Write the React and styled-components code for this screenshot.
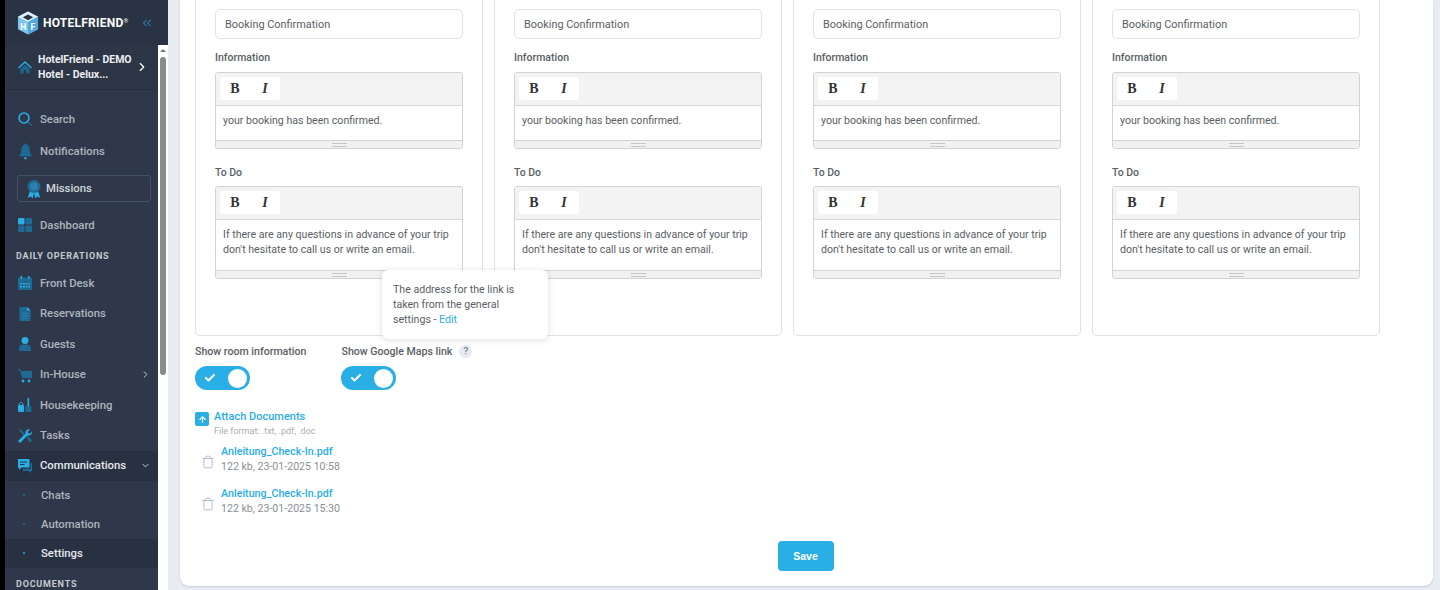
import React from 'react';
import styled, { createGlobalStyle } from 'styled-components';
import { ChevronRight, ChevronDown, ChevronsLeft, Check, Trash, ArrowUp } from 'lucide-react';

const GlobalStyle = createGlobalStyle`
  html, body { margin: 0; padding: 0; height: 590px; overflow: hidden; background: #e9ecf1; }
  body { font-family: Roboto, "Liberation Sans", sans-serif; color: #5a5e64; }
  * { box-sizing: border-box; }
`;

const BLUE = '#29aee6';
const DIM = '#1f6a94';

const Page = styled.div`
  display: flex;
  width: 1440px;
  height: 590px;
  overflow: hidden;
`;
const Strip = styled.div`
  width: 5px;
  background: #000;
  flex: none;
`;
const Sidebar = styled.aside`
  width: 163px;
  flex: none;
  display: flex;
  flex-direction: column;
  background: #2e384a;
`;
const Brand = styled.div`
  height: 45px;
  flex: none;
  display: flex;
  align-items: center;
  padding: 0 0 0 12px;
  background: #2a3344;
`;
const BrandName = styled.span`
  margin-left: 4px;
  color: #fff;
  font-size: 12px;
  font-weight: 700;
  letter-spacing: 0.25px;
  width: 88px;
  white-space: nowrap;
  sup { font-size: 6px; font-weight: 400; vertical-align: 4px; line-height: 0; letter-spacing: 0; }
`;
const Collapse = styled.span`
  display: flex;
  margin-left: 9px;
  color: ${BLUE};
`;
const SideBody = styled.div`
  flex: 1;
  display: flex;
  min-height: 0;
`;
const Nav = styled.nav`
  width: 153px;
  flex: none;
  display: flex;
  flex-direction: column;
  overflow: hidden;
`;
const Hotel = styled.div`
  height: 45px;
  flex: none;
  display: flex;
  align-items: center;
  padding-left: 12px;
  background: #2c3647;
  border-bottom: 1px solid #262f3f;
  color: #eceef1;
  font-size: 10.5px;
  font-weight: 700;
  line-height: 15px;
`;
const HotelName = styled.span`
  margin-left: 5px;
  width: 97px;
`;
const HotelArrow = styled.span`
  display: flex;
  color: #fff;
`;
const Spacer = styled.div`
  height: ${p => p.$h}px;
  flex: none;
`;
const Row = styled.div`
  height: ${p => p.$h || 30.5}px;
  flex: none;
  display: flex;
  align-items: center;
  padding-left: ${p => p.$sub ? 18 : 12}px;
  background: ${p => p.$active ? '#283142' : 'transparent'};
  color: ${p => p.$active ? '#e6e9ed' : '#aeb4bd'};
  font-size: 11.3px;
  font-weight: 500;
`;
const RowIcon = styled.span`
  width: ${p => p.$w || 23}px;
  flex: none;
  display: flex;
  align-items: center;
`;
const RowArrow = styled.span`
  margin-left: auto;
  margin-right: 7px;
  display: flex;
  color: #cfd3d9;
`;
const Dot = styled.span`
  width: 2px;
  height: 2px;
  border-radius: 50%;
  margin-right: 16px;
  background: ${p => p.$on ? BLUE : DIM};
`;
const Missions = styled.div`
  height: 27px;
  flex: none;
  margin: 8px 7px 8px 12px;
  display: flex;
  align-items: center;
  padding-left: 6px;
  border: 1px solid #435066;
  border-radius: 3px;
  color: #d2d6db;
  font-size: 11.3px;
  font-weight: 500;
`;
const Section = styled.div`
  flex: none;
  height: ${p => p.$h}px;
  margin: ${p => p.$mt || 0}px 0 1px;
  display: flex;
  align-items: center;
  padding-left: 11px;
  color: #c6cad0;
  font-size: 9px;
  font-weight: 700;
  letter-spacing: 0.8px;
`;
const Scroll = styled.div`
  width: 10px;
  flex: none;
  background: #fff;
  display: flex;
  flex-direction: column;
  align-items: center;
`;
const ScrollUp = styled.span`
  margin-top: 4px;
  width: 0;
  height: 0;
  border-left: 3px solid transparent;
  border-right: 3px solid transparent;
  border-bottom: 3px solid #777;
`;
const Thumb = styled.span`
  margin-top: 5px;
  width: 6px;
  height: 318px;
  border-radius: 3px;
  background: #8b8b8b;
`;

const Content = styled.main`
  flex: 1;
  padding: 0 7px 4px 12px;
  min-width: 0;
`;
const Panel = styled.section`
  position: relative;
  height: 586px;
  background: #fff;
  border-radius: 0 0 9px 9px;
  box-shadow: 0 1px 2px rgba(120, 130, 150, 0.3);
  padding: 0 15px;
  overflow: hidden;
`;
const Cards = styled.div`
  display: grid;
  grid-template-columns: repeat(4, 288px);
  column-gap: 11px;
  margin-top: -25px;
`;
const Card = styled.div`
  height: 361px;
  padding: 0 19px;
  border: 1px solid #dfe2e8;
  border-radius: 5px;
`;
const Label = styled.div`
  height: ${p => p.$h}px;
  padding-top: ${p => p.$top || 0}px;
  font-size: 10.5px;
  font-weight: 500;
  line-height: 14px;
  color: #5a5e64;
`;
const Input = styled.div`
  height: 30px;
  display: flex;
  align-items: center;
  padding-left: 9px;
  border: 1px solid #dfe2e8;
  border-radius: 5px;
  font-size: 10.9px;
`;
const Editor = styled.div`
  border: 1px solid #cfd3da;
  border-radius: 3px;
  overflow: hidden;
`;
const Toolbar = styled.div`
  height: 33px;
  padding: 4px;
  background: #f3f3f3;
  border-bottom: 1px solid #d5d8de;
`;
const ToolGroup = styled.div`
  width: 60px;
  height: 23px;
  display: flex;
  align-items: center;
  background: #fff;
  border-radius: 3px;
`;
const Tool = styled.span`
  width: 30px;
  text-align: center;
  color: #333;
  font-family: "Liberation Serif", serif;
  font-size: 14px;
  font-weight: 700;
  font-style: ${p => p.$italic ? 'italic' : 'normal'};
`;
const EditorText = styled.div`
  height: ${p => p.$h}px;
  padding: 7px 7px 0;
  font-size: 10.6px;
  line-height: 15px;
  color: #5a5e64;
  white-space: nowrap;
`;
const Grip = styled.div`
  height: 8px;
  display: flex;
  justify-content: center;
  align-items: center;
  background: #f1f1f1;
  border-top: 1px solid #cfd3da;
`;
const GripLines = styled.span`
  width: 15px;
  height: 4px;
  border-top: 1px solid #c6c6c6;
  border-bottom: 1px solid #c6c6c6;
`;
const Switches = styled.div`
  display: flex;
  gap: 35px;
  margin-top: 8px;
`;
const SwitchCol = styled.div`
  display: flex;
  flex-direction: column;
  gap: 8px;
`;
const SwitchLabel = styled.div`
  display: flex;
  align-items: center;
  height: 14px;
  font-size: 10.6px;
  font-weight: 500;
  color: #5a5e64;
`;
const Hint = styled.span`
  width: 13px;
  height: 13px;
  margin-left: 7px;
  border-radius: 50%;
  background: #e8eaf0;
  color: #6a7796;
  font-size: 9px;
  line-height: 13px;
  text-align: center;
`;
const Toggle = styled.div`
  width: 55px;
  height: 24px;
  display: flex;
  align-items: center;
  justify-content: space-between;
  padding: 0 3px 0 9px;
  border-radius: 12px;
  background: ${BLUE};
  color: #fff;
`;
const Knob = styled.span`
  width: 19px;
  height: 19px;
  border-radius: 50%;
  background: #fff;
`;
const Attach = styled.div`
  display: flex;
  gap: 5px;
  margin-top: 20px;
`;
const AttachIcon = styled.span`
  width: 14px;
  height: 14px;
  margin-top: 2px;
  display: flex;
  align-items: center;
  justify-content: center;
  border-radius: 2px;
  background: ${BLUE};
  color: #fff;
`;
const AttachTitle = styled.div`
  font-size: 11px;
  font-weight: 500;
  line-height: 14px;
  color: ${BLUE};
`;
const AttachNote = styled.div`
  font-size: 9px;
  line-height: 14px;
  color: #a9adb3;
`;
const FileRow = styled.div`
  display: flex;
  align-items: center;
  gap: 6px;
  height: 30px;
  margin: ${p => p.$first ? 6 : 12}px 0 0 6px;
  color: #aab3c6;
`;
const FileIcon = styled.span`
  display: flex;
  margin-top: 5px;
`;
const FileName = styled.div`
  font-size: 10.7px;
  font-weight: 500;
  line-height: 15px;
  color: ${BLUE};
`;
const FileMeta = styled.div`
  font-size: 10.6px;
  line-height: 15px;
  color: #8b8f95;
`;
const SaveRow = styled.div`
  display: flex;
  justify-content: center;
  margin: 25px 0 0 -2px;
`;
const Save = styled.button`
  width: 56px;
  height: 30px;
  border: 0;
  border-radius: 4px;
  background: ${BLUE};
  color: #fff;
  font-family: "Liberation Sans", sans-serif;
  font-size: 10.5px;
  font-weight: 700;
`;
const Tip = styled.div`
  position: absolute;
  left: 202px;
  top: 270px;
  width: 166px;
  height: 69px;
  padding: 12px 11px;
  background: #fff;
  border-radius: 6px;
  box-shadow: 0 1px 6px rgba(90, 100, 120, 0.22);
  font-size: 10.6px;
  line-height: 15px;
  color: #5a5e64;
  a { color: ${BLUE}; }
`;

const Svg = ({ w = 16, h = 16, children }) => (
  <svg width={w} height={h} viewBox="0 0 16 16">{children}</svg>
);

const Logo = () => (
  <svg width="22" height="26" viewBox="0 0 23 26">
    <path d="M11.5 1 22 6.5v13L11.5 25 1 19.5v-13z" fill="#7cc4ee" />
    <path d="M11.5 1 22 6.5 11.5 12 1 6.5z" fill="#dff1fb" />
    <path d="M11.5 4 17 7l-5.5 3L6 7z" fill="#2a3344" />
    <path d="M11.5 12 22 6.5v13L11.5 25z" fill="#4fa9e0" />
    <text x="6.5" y="20" textAnchor="middle" fontFamily="Roboto" fontWeight="700" fontSize="9" fill="#fff">H</text>
    <text x="16.5" y="20" textAnchor="middle" fontFamily="Roboto" fontWeight="700" fontSize="9" fill="#fff">F</text>
  </svg>
);

const icons = {
  home: <Svg><path d="M8 2 1 8.500l1 1L8 4l6 5.500 1-1z" fill={BLUE} /><path d="M3.500 10 8 5.800l4.500 4.200v4.500h-3V11h-3v3.500h-3z" fill={DIM} /></Svg>,
  search: <Svg><circle cx="7" cy="7" r="5" fill="none" stroke={BLUE} strokeWidth="1.600" /><path d="m11 11 4 3.500" stroke="#2a7aa8" strokeWidth="1" /></Svg>,
  bell: <Svg w={17} h={19}><path d="M8 .500a1 1 0 0 1 1 1.200C11.500 2.500 12 4.500 12 7.500c0 2 1 3.200 2 4.300v.7H2v-.7c1-1.100 2-2.300 2-4.300C4 4.500 4.500 2.500 7 1.700A1 1 0 0 1 8 .500z" fill={DIM} /><circle cx="8" cy="14.300" r="1.100" fill={BLUE} /></Svg>,
  award: <Svg w={20} h={22}><path d="M5 9 3 15l2.500-1L7 15.500 8 11l1 4.500 1.500-1.500 2.500 1-2-6z" fill={BLUE} /><circle cx="8" cy="6" r="5.200" fill={DIM} /><circle cx="8" cy="6" r="3.200" fill="#2f7fae" /></Svg>,
  dashboard: <Svg><rect x="1" y="1" width="6.500" height="6.500" rx="1" fill={BLUE} /><rect x="8.500" y="1" width="6.500" height="6.500" rx="1" fill={DIM} /><rect x="1" y="8.500" width="6.500" height="6.500" rx="1" fill={DIM} /><rect x="8.500" y="8.500" width="6.500" height="6.500" rx="1" fill={DIM} /></Svg>,
  calendar: <Svg><rect x="1" y="2.500" width="14" height="12.500" rx="1" fill={DIM} /><rect x="3.500" y="1" width="1.500" height="3" fill={BLUE} /><rect x="11" y="1" width="1.500" height="3" fill={BLUE} /><path d="M3 8h2v1.500H3zm3 0h2v1.500H6zm3 0h1.500v1.500H9zm2.500 0H13v1.500h-1.500zM3 11h2v1.500H3zm3 0h2v1.500H6zm3 0h1.500v1.500H9zm2.500 0H13v1.500h-1.500z" fill={BLUE} /></Svg>,
  doc: <Svg><path d="M2.500 1H10l3.500 3.500V15h-11z" fill={DIM} /><path d="M10 1l3.500 3.500H10z" fill={BLUE} /><path d="M4.500 7h7v1h-7zm0 2.500h7v1h-7zm0 2.500h5v1h-5z" fill="#2f7fae" /></Svg>,
  user: <Svg><circle cx="8" cy="4.500" r="3.500" fill={BLUE} /><path d="M2 15v-2.500C2 10 4 8.500 6 8.500h4c2 0 4 1.500 4 4V15z" fill={DIM} /></Svg>,
  cart: <Svg><path d="M1 2h2.500L4 4h11v7H5L3 3H1z" fill={DIM} /><circle cx="6" cy="14" r="1.400" fill={BLUE} /><circle cx="12" cy="14" r="1.400" fill={BLUE} /></Svg>,
  broom: <Svg><rect x="1" y="8" width="6" height="7" rx="1" fill={BLUE} /><path d="M2 8c0-2 1-2.500 2-2.500S6 6 6 8" fill="none" stroke={BLUE} /><rect x="10.500" y="1" width="1.600" height="8" fill={BLUE} /><path d="M8.500 9h5.500l.5 6h-6z" fill={DIM} /></Svg>,
  wrench: <Svg><path d="M15 3.500 12.500 6 10.500 4 13 1.500C10.500.500 8 2.500 8.500 5.500L1 13l2 2 7.500-7.500C13.500 8 15.500 6 15 3.500z" fill={BLUE} /><path d="M2 2l1.500-1L8 6 6.500 7.500zM9.500 9.500 11 8l4 4.500-2 2z" fill={DIM} /></Svg>,
  chat: <Svg><path d="M1 1h10.500a1 1 0 0 1 1 1v6.500a1 1 0 0 1-1 1H4.500L2 12V9.500H1z" fill={BLUE} /><path d="M13.500 5H15v8h-1v2l-2.500-2H6v-2.200h7.500z" fill={DIM} /><path d="M3 3.500h7v1H3zM3 6h4.500v1H3z" fill="#283142" /></Svg>,
};

const Item = ({ icon, label, h, arrow, active }) => (
  <Row $h={h} $active={active}>
    <RowIcon>{icons[icon]}</RowIcon>
    {label}
    {arrow === 'right' && <RowArrow><ChevronRight size={11} /></RowArrow>}
    {arrow === 'down' && <RowArrow><ChevronDown size={11} /></RowArrow>}
  </Row>
);

const SubItem = ({ label, active }) => (
  <Row $h={29} $sub $active={active}>
    <Dot $on={active} />
    {label}
  </Row>
);

const RichText = ({ lines, h }) => (
  <Editor>
    <Toolbar>
      <ToolGroup>
        <Tool>B</Tool>
        <Tool $italic>I</Tool>
      </ToolGroup>
    </Toolbar>
    <EditorText $h={h}>{lines.map(l => <div key={l}>{l}</div>)}</EditorText>
    <Grip><GripLines /></Grip>
  </Editor>
);

const BookingCard = () => (
  <Card>
    <Label $h={33} $top={9}>Subject</Label>
    <Input>Booking Confirmation</Input>
    <Label $h={33} $top={12}>Information</Label>
    <RichText h={34} lines={['your booking has been confirmed.']} />
    <Label $h={37} $top={17}>To Do</Label>
    <RichText h={50} lines={['If there are any questions in advance of your trip', "don't hesitate to call us or write an email."]} />
  </Card>
);

const files = ['122 kb, 23-01-2025 10:58', '122 kb, 23-01-2025 15:30'];

export default function App() {
  return (
    <Page>
      <GlobalStyle />
      <Strip />
      <Sidebar>
        <Brand>
          <Logo />
          <BrandName>HOTELFRIEND<sup>®</sup></BrandName>
          <Collapse><ChevronsLeft size={14} strokeWidth={1.5} /></Collapse>
        </Brand>
        <SideBody>
          <Nav>
            <Hotel>
              {icons.home}
              <HotelName>HotelFriend - DEMO Hotel - Delux...</HotelName>
              <HotelArrow><ChevronRight size={14} /></HotelArrow>
            </Hotel>
            <Spacer $h={13} />
            <Item icon="search" label="Search" h={32} />
            <Item icon="bell" label="Notifications" h={32} />
            <Missions><RowIcon $w={22}>{icons.award}</RowIcon>Missions</Missions>
            <Item icon="dashboard" label="Dashboard" h={30} />
            <Section $h={22} $mt={5}>DAILY OPERATIONS</Section>
            <Item icon="calendar" label="Front Desk" />
            <Item icon="doc" label="Reservations" />
            <Item icon="user" label="Guests" />
            <Item icon="cart" label="In-House" arrow="right" />
            <Item icon="broom" label="Housekeeping" />
            <Item icon="wrench" label="Tasks" />
            <Item icon="chat" label="Communications" arrow="down" active h={29.5} />
            <SubItem label="Chats" />
            <SubItem label="Automation" />
            <SubItem label="Settings" active />
            <Section $h={32}>DOCUMENTS</Section>
          </Nav>
          <Scroll>
            <ScrollUp />
            <Thumb />
          </Scroll>
        </SideBody>
      </Sidebar>
      <Content>
        <Panel>
          <Cards>
            <BookingCard />
            <BookingCard />
            <BookingCard />
            <BookingCard />
          </Cards>
          <Switches>
            <SwitchCol>
              <SwitchLabel>Show room information</SwitchLabel>
              <Toggle><Check size={12} strokeWidth={4} /><Knob /></Toggle>
            </SwitchCol>
            <SwitchCol>
              <SwitchLabel>Show Google Maps link<Hint>?</Hint></SwitchLabel>
              <Toggle><Check size={12} strokeWidth={4} /><Knob /></Toggle>
            </SwitchCol>
          </Switches>
          <Attach>
            <AttachIcon><ArrowUp size={9} strokeWidth={3} /></AttachIcon>
            <div>
              <AttachTitle>Attach Documents</AttachTitle>
              <AttachNote>File format: .txt, .pdf, .doc</AttachNote>
            </div>
          </Attach>
          {files.map((meta, i) => (
            <FileRow key={meta} $first={i === 0}>
              <FileIcon><Trash size={14} strokeWidth={1.5} /></FileIcon>
              <div>
                <FileName>Anleitung_Check-In.pdf</FileName>
                <FileMeta>{meta}</FileMeta>
              </div>
            </FileRow>
          ))}
          <SaveRow><Save>Save</Save></SaveRow>
          <Tip>The address for the link is taken from the general settings - <a>Edit</a></Tip>
        </Panel>
      </Content>
    </Page>
  );
}
